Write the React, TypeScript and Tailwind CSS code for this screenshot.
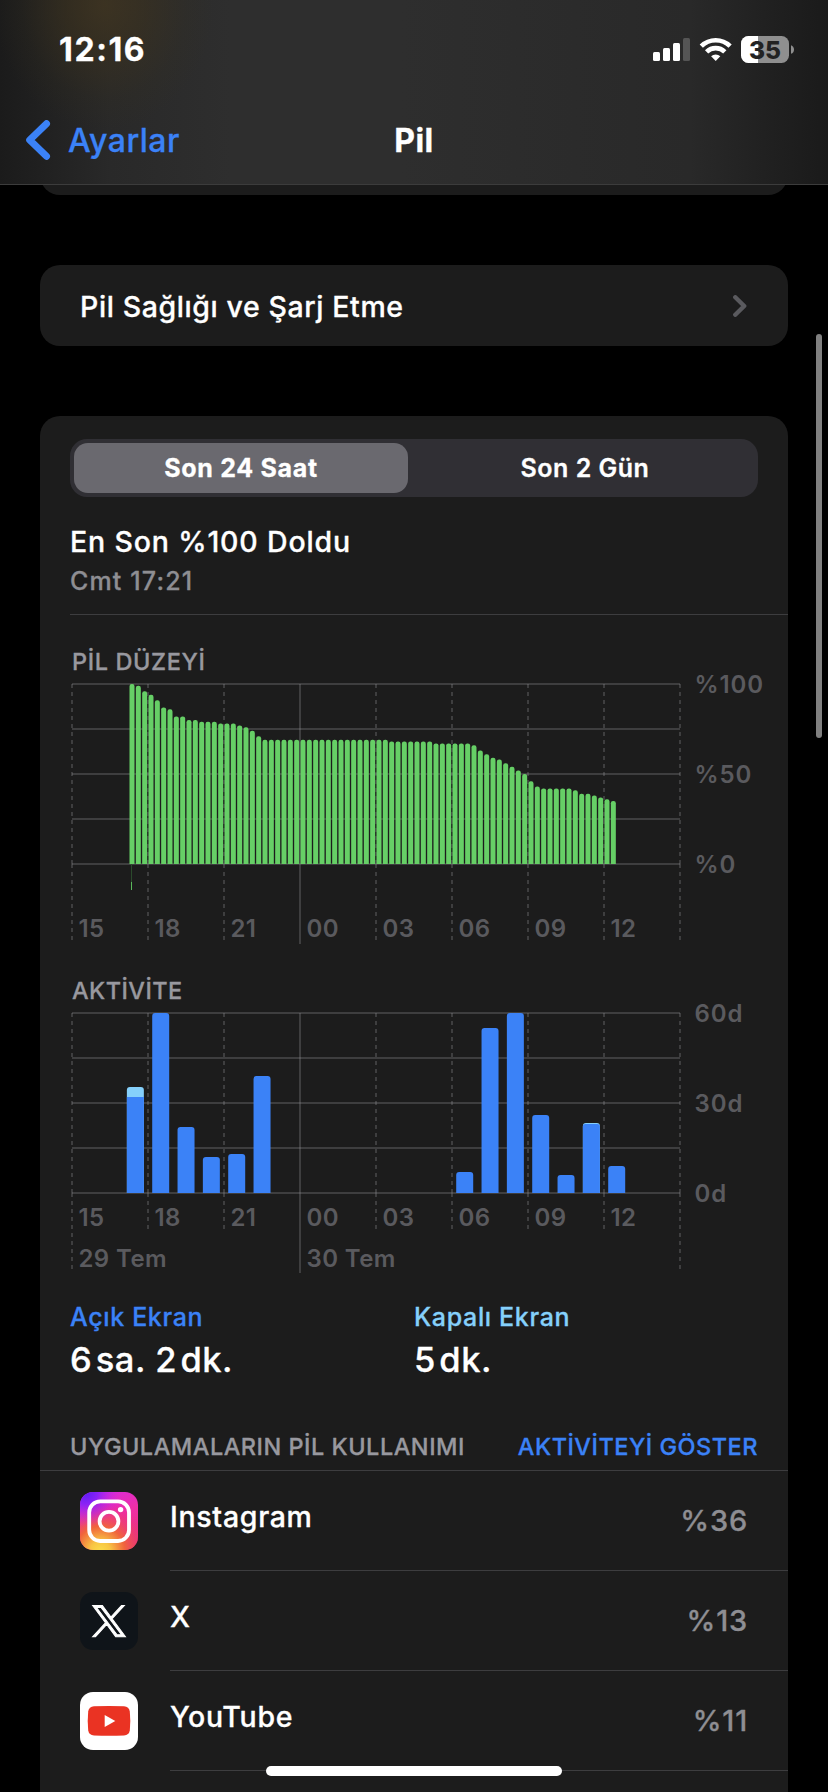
import type { ReactNode } from 'react';

const GRID_X = [0, 76, 152, 228, 304, 380, 456, 532, 608];
const GRID_Y = [0, 45, 90, 135, 180];
const HOURS = ['15', '18', '21', '00', '03', '06', '09', '12'];

// one sample every 15 minutes, starting at 17:15
const LEVELS = [
    100, 99, 96, 94, 91, 87, 86, 82, 82, 80, 80, 79, 79, 79, 78, 78, 78, 77, 76, 74, 71,
    69, 69, 69, 69, 69, 69, 69, 69, 69, 69, 69, 69, 69, 69, 69, 69, 69, 69, 69, 69,
    68, 68, 68, 68, 68, 68, 68, 67, 67, 67, 67, 67, 67, 66, 63, 61, 59, 58, 56, 54, 52, 50,
    46, 43, 42, 42, 42, 42, 42, 41, 39, 39, 38, 37, 36, 35,
];

// slot = hours since 15:00
const ACTIVITY = [
    { slot: 2, on: 32, off: 3.33 },
    { slot: 3, on: 60, off: 0 },
    { slot: 4, on: 22, off: 0 },
    { slot: 5, on: 12, off: 0 },
    { slot: 6, on: 13, off: 0 },
    { slot: 7, on: 39, off: 0 },
    { slot: 15, on: 7, off: 0 },
    { slot: 16, on: 55, off: 0 },
    { slot: 17, on: 60, off: 0 },
    { slot: 18, on: 26, off: 0 },
    { slot: 19, on: 6, off: 0 },
    { slot: 20, on: 23, off: 0.33 },
    { slot: 21, on: 9, off: 0 },
];

function roundedBar(x: number, y: number, w: number, h: number, r: number) {
    return `M${x} ${y + h}V${y + r}a${r} ${r} 0 0 1 ${r} ${-r}h${w - 2 * r}a${r} ${r} 0 0 1 ${r} ${r}v${h - r}z`;
}

interface ChartProps {
    dashEnd: number;
    edgeEnd: number;
    solidEnd: number;
    hourY: number;
    yLabels: string[];
    dates?: string[];
    children: ReactNode;
}

function Chart({ dashEnd, edgeEnd, solidEnd, hourY, yLabels, dates, children }: ChartProps) {
    return (
        <svg width="718" height="270" viewBox="-2 -8 718 270" className="block overflow-visible">
            <g fill="none" stroke="#8e8e93" strokeOpacity="0.3" strokeWidth="2">
                {GRID_Y.map((y) => (
                    <path key={y} d={`M0 ${y}H608`} />
                ))}
                {GRID_X.map((x, i) =>
                    i === 3 ? (
                        <path key={x} d={`M${x} 0V${solidEnd}`} />
                    ) : (
                        // the dash pattern restarts below the baseline
                        <path
                            key={x}
                            d={`M${x} 0V180M${x} 180V${i === 0 || i === 8 ? edgeEnd : dashEnd}`}
                            strokeDasharray="4 4"
                        />
                    )
                )}
            </g>
            {children}
            <g fill="#5a5a5e" className="text-[24px] font-semibold tracking-[0.4px]">
                {HOURS.map((hour, i) => (
                    <text key={hour} x={GRID_X[i] + 6.5} y={hourY + 0.4}>
                        {hour}
                    </text>
                ))}
                {dates?.map((date, i) => (
                    <text key={date} x={i * 228 + 6.5} y={hourY + 41}>
                        {date}
                    </text>
                ))}
            </g>
            <g fill="#5a5a5e" className="text-[24px] font-semibold tracking-[0.9px]">
                {yLabels.map((label, i) => (
                    <text key={label} x="622.5" y={i * 90 + 9.3}>
                        {label}
                    </text>
                ))}
            </g>
        </svg>
    );
}

function StatusIcons() {
    return (
        <svg width="144" height="32" viewBox="652 34 144 32" className="block">
            <g fill="#fff">
                <rect x="653" y="52" width="7" height="9" rx="1.5" />
                <rect x="663" y="48" width="7" height="13" rx="1.5" />
                <rect x="673" y="43" width="7" height="18" rx="1.5" />
                <rect x="683" y="38" width="7" height="23" rx="1.5" fill="#555" />
            </g>
            <g fill="none" stroke="#fff" strokeWidth="4.6">
                <path d="M701.3 46.2a20.5 20.5 0 0 1 28.8 0" />
                <path d="M706.6 51.8a13 13 0 0 1 18.2 0" />
            </g>
            <path d="M715.7 61l-4.6-4.7a6.6 6.6 0 0 1 9.2 0z" fill="#fff" />
            <clipPath id="battery">
                <rect x="741" y="36" width="48" height="27" rx="7.5" />
            </clipPath>
            <g clipPath="url(#battery)">
                <rect x="741" y="36" width="48" height="27" fill="#8f8f8f" />
                <rect x="741" y="36" width="17" height="27" fill="#fff" />
            </g>
            <path d="M791 45.2c4 1.2 4 7.4 0 8.6z" fill="#8f8f8f" />
            <text x="765" y="58.5" textAnchor="middle" fill="#222" className="text-[24.5px] font-extrabold">
                35
            </text>
        </svg>
    );
}

function InstagramIcon() {
    return (
        <svg width="58" height="58" viewBox="0 0 58 58">
            <defs>
                <linearGradient id="ig-base" x1="0.3" y1="0" x2="0.7" y2="1">
                    <stop offset="0" stopColor="#d92ae0" />
                    <stop offset="0.45" stopColor="#ee2fa6" />
                    <stop offset="1" stopColor="#e8307a" />
                </linearGradient>
                <radialGradient id="ig-warm" cx="0.35" cy="1.02" r="0.85">
                    <stop offset="0" stopColor="#fbdc4a" />
                    <stop offset="0.2" stopColor="#f8c544" />
                    <stop offset="0.5" stopColor="#f0643c" />
                    <stop offset="1" stopColor="#ee2f7a" stopOpacity="0" />
                </radialGradient>
                <radialGradient id="ig-cool" cx="0.1" cy="0" r="0.6">
                    <stop offset="0" stopColor="#5a1cf5" />
                    <stop offset="0.35" stopColor="#8a22f5" />
                    <stop offset="1" stopColor="#d02ae0" stopOpacity="0" />
                </radialGradient>
            </defs>
            <rect width="58" height="58" rx="13" fill="url(#ig-base)" />
            <rect width="58" height="58" rx="13" fill="url(#ig-warm)" />
            <rect width="58" height="58" rx="13" fill="url(#ig-cool)" />
            <g fill="none" stroke="#fff" strokeWidth="3.8">
                <rect x="9.2" y="9.4" width="39.8" height="39.6" rx="11" />
                <circle cx="29" cy="29.2" r="9.4" />
            </g>
            <circle cx="40.6" cy="17.6" r="2.7" fill="#fff" />
        </svg>
    );
}

function XIcon() {
    return (
        <svg width="58" height="58" viewBox="0 0 58 58">
            <rect width="58" height="58" rx="13" fill="#0f1419" />
            <g transform="translate(12.6 13.5) scale(0.0274 0.0254)">
                <path
                    fill="#fff"
                    stroke="#fff"
                    strokeWidth="38"
                    d="M714.163 519.284L1160.89 0H1055.03L667.137 450.887L357.328 0H0L468.492 681.821L0 1226.37H105.866L515.491 750.218L842.672 1226.37H1200L714.137 519.284H714.163ZM569.165 687.828L521.697 619.934L144.011 79.6944H306.615L611.412 515.685L658.88 583.579L1055.08 1150.3H892.476L569.165 687.854V687.828Z"
                />
            </g>
        </svg>
    );
}

function YouTubeIcon() {
    return (
        <svg width="58" height="58" viewBox="0 0 58 58">
            <rect width="58" height="58" rx="13" fill="#fff" />
            <path
                fill="#ea3323"
                d="M14 14.3q15-.6 30 0q5 .3 5.8 5.2q1 9.5 0 19q-.8 4.7-5.8 5q-15 .6-30 0q-5-.3-5.8-5q-1-9.5 0-19q.8-4.9 5.8-5.2z"
            />
            <path fill="#fff" d="M24.7 23v12l10.6-6z" />
        </svg>
    );
}

const APPS = [
    { name: 'Instagram', usage: '%36', icon: <InstagramIcon /> },
    { name: 'X', usage: '%13', icon: <XIcon /> },
    { name: 'YouTube', usage: '%11', icon: <YouTubeIcon /> },
];

export default function App() {
    return (
        <div className="relative h-[1792px] w-[828px] overflow-hidden bg-black font-['Inter',sans-serif] font-medium text-white [-webkit-text-stroke:0.3px]">
            {/* Status bar + navigation */}
            <header className="h-[185px] border-b border-[#3c3c3c] bg-[radial-gradient(ellipse_110px_125px_at_104px_5px,rgba(70,56,30,0.65),rgba(64,52,28,0.5)_35%,rgba(58,50,28,0.15)_75%,transparent),linear-gradient(90deg,#1b1b1b,#292929_110px,#2e2e2e_230px,#2e2e2e_400px,#292929_690px,#1a1a1a)] pt-[30px]">
                <div className="flex h-10 justify-between pr-8 pl-[59px]">
                    <span className="text-[32px] leading-10 font-bold tracking-[1.6px]">12:16</span>
                    <div className="pt-1">
                        <StatusIcons />
                    </div>
                </div>
                <div className="mt-[50px] grid h-10 grid-cols-3 text-[32px] leading-[42px] tracking-[0.5px]">
                    <div className="flex text-[#3b82f7]">
                        <svg width="68" height="40" viewBox="0 0 68 40" fill="none">
                            <path
                                d="M46.5 3.7L29.7 20l16.8 16.3"
                                stroke="currentColor"
                                strokeWidth="7"
                                strokeLinecap="round"
                                strokeLinejoin="round"
                            />
                        </svg>
                        <span>Ayarlar</span>
                    </div>
                    <h1 className="text-center font-bold">Pil</h1>
                </div>
            </header>

            <main className="px-10">
                {/* Tail of the previous card, scrolled under the bar */}
                <div className="flex h-[10px] items-end overflow-hidden">
                    <div className="h-[60px] w-full shrink-0 rounded-[20px] bg-[#1c1c1c]" />
                </div>

                <div className="mt-[70px] flex h-[81px] items-center justify-between rounded-[20px] bg-[#1c1c1c] pr-[41px] pl-10">
                    <span className="pt-[3px] text-[28.5px] leading-10 tracking-[0.6px]">Pil Sağlığı ve Şarj Etme</span>
                    <svg width="14" height="22" viewBox="0 0 14 22" fill="none">
                        <path
                            d="M2.3 2.3L11.2 11l-8.9 8.7"
                            stroke="#5a5a5e"
                            strokeWidth="4.4"
                            strokeLinecap="round"
                            strokeLinejoin="round"
                        />
                    </svg>
                </div>

                <section className="mt-[70px] h-[1400px] rounded-t-[20px] bg-[#1c1c1c] pt-[23px]">
                    <div className="pl-[30px]">
                        <div className="mr-[30px] flex h-[58px] rounded-[17px] bg-[#302f34] p-1 text-center text-[25px] leading-[51px]">
                            <div className="w-[334px] rounded-[14px] bg-[#6a696f] font-bold tracking-[0.7px]">Son 24 Saat</div>
                            <div className="flex-1 pl-2 font-semibold tracking-[0.5px]">Son 2 Gün</div>
                        </div>

                        <h2 className="mt-[27px] text-[28.5px] leading-9 tracking-[0.85px]">En Son %100 Doldu</h2>
                        <p className="mt-[6px] text-[25px] leading-[30px] tracking-[1.15px] text-[#8e8e93]">Cmt 17:21</p>
                        <div className="mt-[18px] h-px bg-[#3d3d3f]" />

                        <h3 className="mt-8 pl-0.5 text-[23.5px] leading-[30px] tracking-[0.6px] text-[#98989f]">PİL DÜZEYİ</h3>
                        <div className="-mt-px">
                            <Chart dashEnd={256} edgeEnd={256} solidEnd={260} hourY={253} yLabels={['%100', '%50', '%0']}>
                                <g fill="#66cf66">
                                    {LEVELS.map((level, i) => (
                                        <path
                                            key={i}
                                            d={roundedBar(57.5 + i * 6.3333, 180 - level * 1.8, 5, level * 1.8, 2.2)}
                                        />
                                    ))}
                                </g>
                                <rect x="59" y="180" width="1" height="18" fill="#2b4a2c" />
                                <rect x="59" y="198" width="1" height="8" fill="#5ab85a" />
                            </Chart>
                        </div>

                        <h3 className="mt-[30px] pl-0.5 text-[23.5px] leading-[30px] tracking-[0.45px] text-[#98989f]">AKTİVİTE</h3>
                        <div className="-mt-px">
                            <Chart
                                dashEnd={216}
                                edgeEnd={256}
                                solidEnd={260}
                                hourY={213}
                                yLabels={['60d', '30d', '0d']}
                                dates={['29 Tem', '30 Tem']}
                            >
                                {ACTIVITY.map(({ slot, on, off }) => {
                                    const x = slot * 25.3333 + 4.2;
                                    const total = (on + off) * 3;
                                    return (
                                        <g key={slot}>
                                            <path
                                                d={roundedBar(x, 180 - total, 17, total, 3)}
                                                fill={off > 0 ? '#85d0fb' : '#3b82f7'}
                                            />
                                            {off > 1 && (
                                                <rect x={x} y={180 - on * 3} width="17" height={on * 3} fill="#3b82f7" />
                                            )}
                                            {off > 0 && off < 1 && (
                                                <path d={roundedBar(x, 180 - on * 3, 17, on * 3, 2.5)} fill="#3b82f7" />
                                            )}
                                        </g>
                                    );
                                })}
                            </Chart>
                        </div>

                        <div className="mt-[27px] flex">
                            <div className="w-[344px]">
                                <p className="text-[25px] leading-[30px] tracking-[0.65px] text-[#3b82f7]">Açık Ekran</p>
                                <p className="mt-[6px] text-[34.5px] leading-[44px] tracking-[0.5px]">6&#8202;sa. 2&#8202;dk.</p>
                            </div>
                            <div>
                                <p className="text-[25px] leading-[30px] tracking-[0.65px] text-[#85d0fb]">Kapalı Ekran</p>
                                <p className="mt-[6px] text-[34.5px] leading-[44px] tracking-[0.5px]">5&#8202;dk.</p>
                            </div>
                        </div>
                    </div>

                    <div className="mt-[50px] flex justify-between border-b border-[#3d3d3f] px-[30px] pb-2 text-[23.5px] leading-[30px] tracking-[0.5px]">
                        <span className="text-[#98989f]">UYGULAMALARIN PİL KULLANIMI</span>
                        <span className="text-[#3b82f7]">AKTİVİTEYİ GÖSTER</span>
                    </div>

                    {APPS.map((app) => (
                        <div key={app.name} className="flex h-[100px] pl-10">
                            <div className="mr-8 w-[58px] pt-[21px]">{app.icon}</div>
                            <div className="flex flex-1 justify-between border-b border-[#3d3d3f] pr-10 leading-10">
                                <span className="mt-[26px] text-[28.5px] tracking-[0.7px]">{app.name}</span>
                                <span className="mt-[30px] text-[29px] tracking-[0.8px] text-[#8e8e93]">{app.usage}</span>
                            </div>
                        </div>
                    ))}
                </section>
            </main>

            {/* Scroll indicator and home bar float over the list */}
            <div className="absolute top-[334px] right-1.5 h-[404px] w-1.5 rounded-full bg-[#808080]" />
            <div className="absolute top-[1766px] left-[266px] h-2.5 w-[296px] rounded-full bg-white" />
        </div>
    );
}
